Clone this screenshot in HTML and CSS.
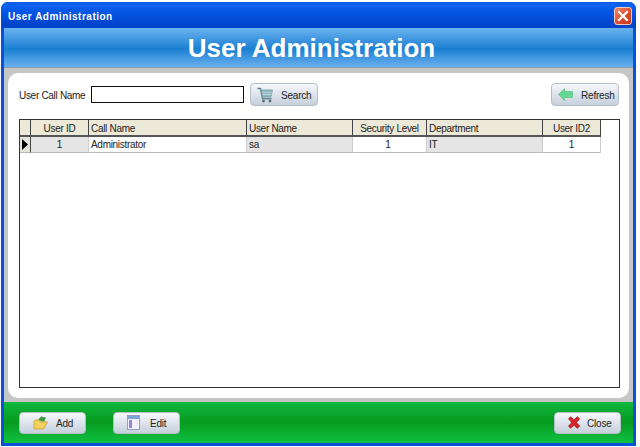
FILE: index.html
```html
<!DOCTYPE html>
<html lang="en">
<head>
<meta charset="utf-8">
<title>User Administration</title>
<link rel="stylesheet" href="styles.css">
</head>
<body>
<div class="window">
  <div class="titlebar">
    <span class="title">User Administration</span>
    <span class="close-x"><svg width="14" height="14" viewBox="0 0 14 14"><path d="M3 3 L11 11 M11 3 L3 11" stroke="#fff" stroke-width="2.2" stroke-linecap="square" fill="none"/></svg></span>
  </div>
  <div class="frame">
    <header class="banner">User Administration</header>
    <main class="panel-wrap">
      <div class="panel">
        <div class="toolbar">
          <label class="field-label">User Call Name</label>
          <span class="input"></span>
          <button class="btn btn-search">
            <svg class="ico" width="16" height="16" viewBox="0 0 16 16"><path d="M0.5 1.5 H3.5 L5.5 11.5 H14.5" fill="none" stroke="#5f7f8a" stroke-width="1.3"/><path d="M4 3 H15.5 L14 9.5 H5.5 Z" fill="#8fb6c0" stroke="#6c97a3" stroke-width=".7"/><path d="M5 5.2 H15 M5.4 7.4 H14.5" stroke="#cfe2e7" stroke-width=".7"/><circle cx="6.5" cy="14" r="1.4" fill="#55707a"/><circle cx="13" cy="14" r="1.4" fill="#55707a"/></svg>
            <span>Search</span>
          </button>
          <button class="btn btn-refresh">
            <svg class="ico" width="15" height="13" viewBox="0 0 15 13"><path d="M0.5 6.5 L6.5 0.5 V3.5 H14.5 V9.5 H6.5 V12.5 Z" fill="#62d98e" stroke="#55c080" stroke-width=".6"/></svg>
            <span>Refresh</span>
          </button>
        </div>
        <div class="grid">
          <div class="row head">
            <div class="cell corner"></div>
            <div class="cell center">User ID</div>
            <div class="cell">Call Name</div>
            <div class="cell">User Name</div>
            <div class="cell center">Security Level</div>
            <div class="cell">Department</div>
            <div class="cell center">User ID2</div>
          </div>
          <div class="row body">
            <div class="cell marker"><svg width="6" height="11" viewBox="0 0 6 11"><path d="M0 0 L6 5.5 L0 11 Z" fill="#000"/></svg></div>
            <div class="cell center alt">1</div>
            <div class="cell">Administrator</div>
            <div class="cell alt">sa</div>
            <div class="cell center level">1</div>
            <div class="cell alt">IT</div>
            <div class="cell center">1</div>
          </div>
        </div>
      </div>
    </main>
    <footer class="footer">
      <button class="btn btn-foot btn-add">
        <svg class="ico" width="15" height="14" viewBox="0 0 15 14"><path d="M5 4 L8 0.5 L13 1.5 L11 6 Z" fill="#3f9a3a"/><path d="M1 5 L1 13 H10.5 L14.5 6 H7 L6 4 H2 Z" fill="#f4d35c" stroke="#c9a02e" stroke-width=".8"/></svg>
        <span>Add</span>
      </button>
      <button class="btn btn-foot btn-edit">
        <svg class="ico" width="13" height="15" viewBox="0 0 13 15"><rect x=".5" y=".5" width="12" height="14" fill="#f1f1fb" stroke="#9a9cc8"/><rect x="1" y="1" width="11" height="3" fill="#7aa7d8"/><rect x="2" y="5" width="3" height="8" fill="#9c7fd8"/></svg>
        <span>Edit</span>
      </button>
      <button class="btn btn-foot btn-close">
        <svg class="ico" width="14" height="13" viewBox="0 0 15 14"><path d="M1.5 3 L4 0.8 L7.5 4 L11 0.8 L13.7 3 L10.2 7 L13.7 11 L11 13.2 L7.5 10 L4 13.2 L1.5 11 L5 7 Z" fill="#d8232a" stroke="#8f1a1e" stroke-width=".7"/></svg>
        <span>Close</span>
      </button>
    </footer>
  </div>
</div>
</body>
</html>
```
FILE: styles.css
```css
* { box-sizing: border-box; }
html, body { margin: 0; padding: 0; background: #fff; }
body {
  width: 640px;
  height: 447px;
  overflow: hidden;
  font-family: "Liberation Sans", Arial, sans-serif;
  padding: 2px 4px 1px 1px;
}
.window {
  height: 444px;
  background: #0a50d8;
  border-radius: 7px 7px 0 0;
  display: flex;
  flex-direction: column;
}
.titlebar {
  height: 26px;
  flex: none;
  display: flex;
  align-items: center;
  justify-content: space-between;
  padding: 0 4px 0 7px;
  border-radius: 7px 7px 0 0;
  background: linear-gradient(to bottom, #0a5be0 0, #0c62f0 3px, #0556e4 10px, #0347d0 20px, #0445c8 26px);
}
.title {
  color: #fff;
  font-size: 10px;
  font-weight: bold;
  letter-spacing: 0.5px;
  position: relative;
  top: 1px;
}
.close-x {
  width: 18px;
  height: 18px;
  border-radius: 3px;
  border: 1px solid #f4c8b8;
  background: linear-gradient(135deg, #ee8a6a, #d9482a 60%, #c43a1f);
  display: flex;
  align-items: center;
  justify-content: center;
  position: relative;
  top: 1px;
}
.frame {
  flex: 1;
  margin: 0 3px 3px 3px;
  display: flex;
  flex-direction: column;
  min-height: 0;
}
.banner {
  height: 40px;
  flex: none;
  text-align: center;
  line-height: 40px;
  color: #fff;
  font-size: 26px;
  font-weight: bold;
  padding-right: 14px;
  background: linear-gradient(to bottom, #6cb2f0 0, #1a7fd2 21px, #6ab0ee 39px);
  border-bottom: 1px solid #8a9aa8;
}
.panel-wrap {
  flex: 1;
  min-height: 0;
  background: #c6c6c6;
  padding: 5px 4px 4px 4px;
}
.panel {
  height: 100%;
  background: #fff;
  border-radius: 10px;
  padding: 10px 9px 10px 11px;
  display: flex;
  flex-direction: column;
}
.toolbar {
  display: flex;
  align-items: center;
  height: 23px;
  flex: none;
  font-size: 10px;
  letter-spacing: -0.3px;
  color: #222;
}
.field-label { width: 72px; flex: none; padding-top: 1px; }
.input {
  width: 153px;
  height: 17px;
  flex: none;
  background: #fff;
  border: 1px solid #111;
}
.btn {
  display: flex;
  align-items: center;
  gap: 8px;
  width: 68px;
  height: 23px;
  padding: 0 0 0 6px;
  border: 1px solid #b4bec8;
  border-radius: 4px;
  background: linear-gradient(to bottom, #f6f8fb, #d8dfe8 60%, #c6d0dc);
  font-family: inherit;
  font-size: 10px;
  letter-spacing: -0.2px;
  color: #222;
  flex: none;
}
.btn span { padding-top: 1px; }
.btn-search { margin-left: 6px; }
.btn-refresh { margin-left: auto; margin-right: 1px; }
.grid {
  margin-top: 13px;
  flex: 1;
  min-height: 0;
  border: 1px solid #333;
  font-size: 10px;
  letter-spacing: -0.3px;
  color: #222;
}
.row {
  display: grid;
  grid-template-columns: 11px 58px 158px 106px 74px 116px 58px;
  width: 581px;
}
.head { height: 17px; }
.head .cell {
  background: #ece9d8;
  border-right: 1px solid #444;
  border-bottom: 2px solid #555;
  padding-top: 1px;
}
.body { height: 16px; }
.body .cell { border-bottom: 1px solid #bbb; border-right: 1px solid #ccc; }
.cell {
  display: flex;
  align-items: center;
  padding-left: 2px;
  background: #fff;
  white-space: nowrap;
  overflow: hidden;
}
.center { justify-content: center; padding-left: 0; }
.level { padding-right: 3px; }
.alt { background: #e4e4e4; }
.body .marker {
  background: #e4e4dc;
  border-right: 1px solid #444;
  padding-left: 2px;
}
.footer {
  height: 41px;
  flex: none;
  display: flex;
  align-items: center;
  padding: 0 12px 0 15px;
  background: linear-gradient(to bottom, #10b840 0, #069a1e 20px, #10c040 40px);
}
.btn-foot { height: 22px; width: 67px; padding-left: 13px; }
.btn-edit { margin-left: 27px; gap: 10px; }
.btn-close { margin-left: auto; padding-left: 12px; gap: 6px; }
.ico { flex: none; }
```
